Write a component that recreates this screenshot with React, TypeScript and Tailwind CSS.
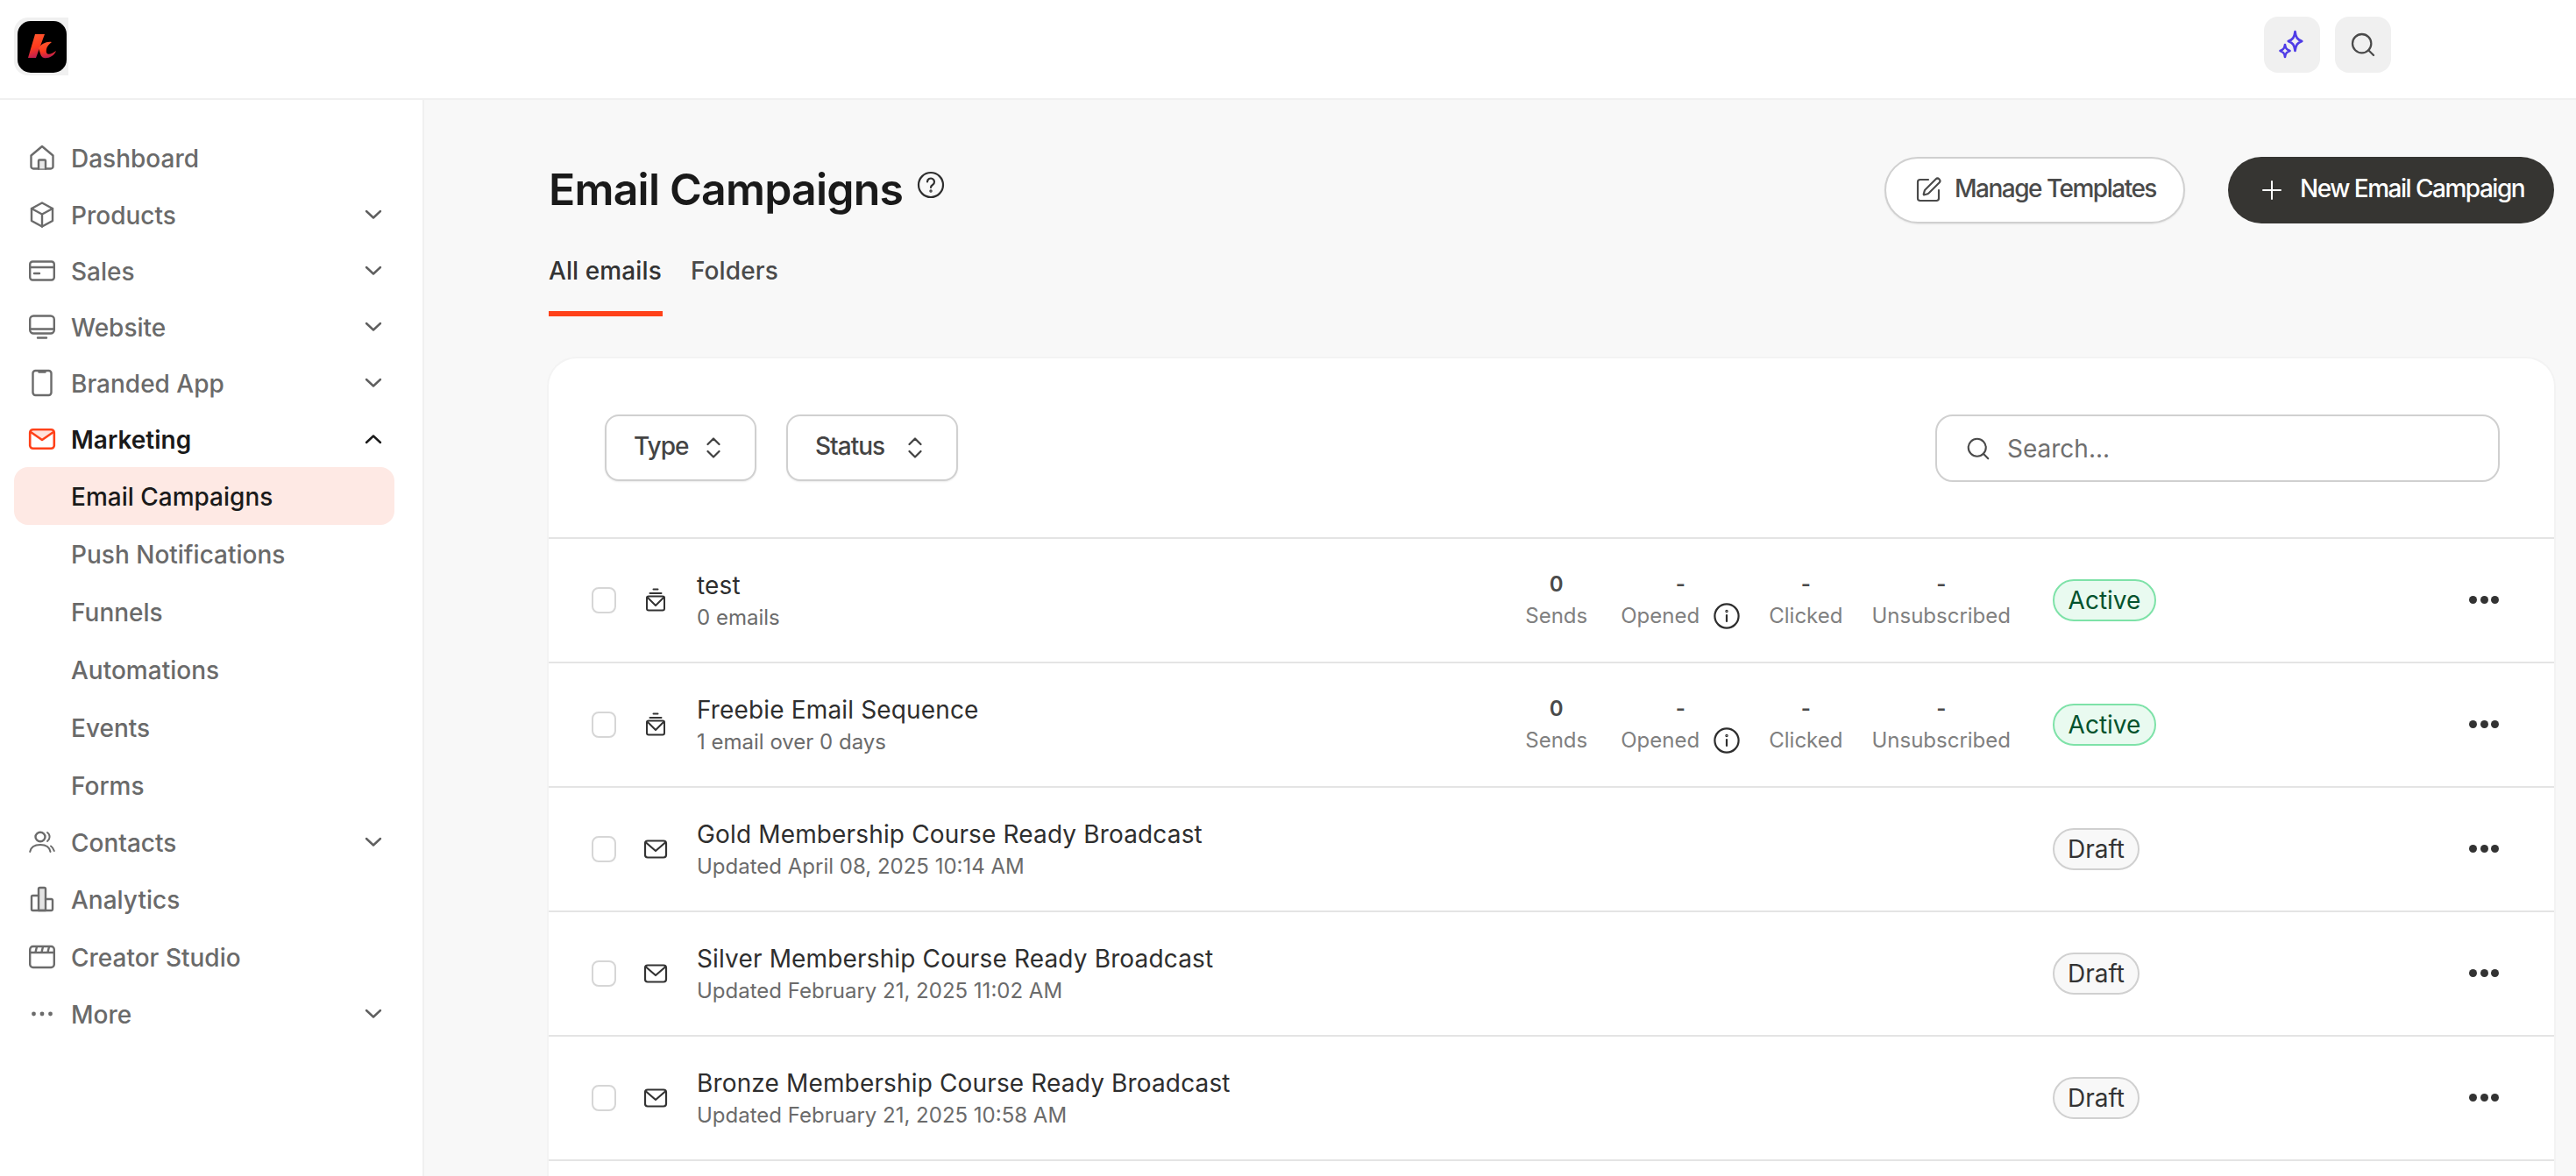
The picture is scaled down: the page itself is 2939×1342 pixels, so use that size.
import { Fragment } from "react";
import { Search, SquarePen } from "lucide-react";

const G = "#6b6b6b";

function Ic({ children }: { children: React.ReactNode }) {
  return (
    <svg width="32" height="32" viewBox="0 0 32 32" fill="none" stroke={G} strokeWidth="2.4" strokeLinecap="round" strokeLinejoin="round">
      {children}
    </svg>
  );
}

const icons: Record<string, React.ReactNode> = {
  home: (
    <Ic>
      <path d="M3.5 13.5 16 3l12.5 10.5V26a2.5 2.5 0 0 1-2.5 2.5H6A2.5 2.5 0 0 1 3.5 26Z" />
      <path d="M12 28.5V19.5a1 1 0 0 1 1-1h6a1 1 0 0 1 1 1v9" fill="#e8e8e8" />
    </Ic>
  ),
  box: (
    <Ic>
      <path d="M16 2.5 28 9v14l-12 6.5L4 23V9Z" />
      <path d="M4 9l12 6.5L28 9M16 15.5V29.5" />
    </Ic>
  ),
  card: (
    <Ic>
      <rect x="2.2" y="5.5" width="27.6" height="21" rx="3" />
      <path d="M2.2 12h27.6M7 19h6" />
    </Ic>
  ),
  monitor: (
    <Ic>
      <rect x="2.2" y="3.5" width="27.6" height="20" rx="4" />
      <path d="M2.2 18.5h27.6M11 28.5h10" />
    </Ic>
  ),
  tablet: (
    <Ic>
      <rect x="5.5" y="2" width="21" height="28" rx="3" />
      <path d="M12.5 3.5h7" />
    </Ic>
  ),
  mail: (
    <svg width="32" height="32" viewBox="0 0 32 32" fill="none" stroke="#ff4119" strokeWidth="2.6" strokeLinecap="round" strokeLinejoin="round">
      <path d="M3 7 16 17 29 7" fill="#ffe3dc" stroke="none" />
      <rect x="2.2" y="5.2" width="27.6" height="21.6" rx="3.5" />
      <path d="M3 8 16 17 29 8" />
    </svg>
  ),
  contacts: (
    <Ic>
      <ellipse cx="14" cy="10" rx="5.5" ry="5.2" />
      <path d="M2.2 27c1-5.5 6-8 11.8-8s10.5 2.5 11.5 8" strokeWidth="2" />
      <path d="M22 5c1.8 1.2 2.6 3 2.6 5s-.9 3.7-2.6 5M26 20.5c1.8 1.2 3 3 3.8 5.5" strokeWidth="2" />
    </Ic>
  ),
  chart: (
    <Ic>
      <path d="M12 29V4.5A1.5 1.5 0 0 1 13.5 3h5A1.5 1.5 0 0 1 20 4.5V29Z" fill="#e4e4e4" />
      <path d="M12 12H5.5A1.5 1.5 0 0 0 4 13.5V27.5A1.5 1.5 0 0 0 5.5 29H26.5A1.5 1.5 0 0 0 28 27.5V17.5A1.5 1.5 0 0 0 26.5 16H20" />
    </Ic>
  ),
  clapper: (
    <Ic>
      <rect x="2.2" y="4" width="27.6" height="24" rx="3.5" />
      <path d="M2.2 11h27.6M10 4.5l-1.5 6M17 4.5l-1.5 6M24 4.5l-1.5 6" />
    </Ic>
  ),
  dots: (
    <svg width="32" height="32" viewBox="0 0 32 32" fill={G}>
      <circle cx="6.5" cy="16" r="2.4" />
      <circle cx="16" cy="16" r="2.4" />
      <circle cx="25.5" cy="16" r="2.4" />
    </svg>
  ),
};

function Chevron({ up, dark }: { up?: boolean; dark?: boolean }) {
  return (
    <svg width="20" height="12" viewBox="0 0 20 12" fill="none" stroke={dark ? "#1a1a1a" : "#5f5f5f"} strokeWidth="2.4" strokeLinecap="round" strokeLinejoin="round">
      <path d={up ? "M2 10 10 2.5 18 10" : "M2 2 10 9.5 18 2"} />
    </svg>
  );
}

type Nav = { label: string; icon?: string; chev?: boolean; active?: boolean; sub?: boolean; current?: boolean };
const nav: Nav[] = [
  { label: "Dashboard", icon: "home" },
  { label: "Products", icon: "box", chev: true },
  { label: "Sales", icon: "card", chev: true },
  { label: "Website", icon: "monitor", chev: true },
  { label: "Branded App", icon: "tablet", chev: true },
  { label: "Marketing", icon: "mail", chev: true, active: true },
  { label: "Email Campaigns", sub: true, current: true },
  { label: "Push Notifications", sub: true },
  { label: "Funnels", sub: true },
  { label: "Automations", sub: true },
  { label: "Events", sub: true },
  { label: "Forms", sub: true },
  { label: "Contacts", icon: "contacts", chev: true },
  { label: "Analytics", icon: "chart" },
  { label: "Creator Studio", icon: "clapper" },
  { label: "More", icon: "dots", chev: true },
];

function Sidebar() {
  return (
    <aside className="w-[484px] shrink-0 border-r-2 border-[#f0f0f0] bg-white pt-[33px] pl-4 pr-[32px]">
      {nav.map((n) => (
        <div
          key={n.label}
          className={
            "flex items-center pl-[16px] pr-[14px] text-[28px] " +
            (n.current ? "rounded-[16px] bg-[#fee9e4] " : "") +
            (n.chev ? "h-[64px] " : "h-[66px] ") +
            (n.active ? "font-semibold text-[#1a1a1a]" : n.current ? "font-medium text-[#1a1a1a]" : "font-medium text-[#6a6a6a]")
          }
        >
          <span className="flex w-[49px] shrink-0 items-center">{n.icon ? icons[n.icon] : null}</span>
          <span className="flex-1 pt-[1px]">{n.label}</span>
          {n.chev ? <Chevron up={n.active} dark={n.active} /> : null}
        </div>
      ))}
    </aside>
  );
}

function Updown() {
  return (
    <svg width="18" height="26" viewBox="0 0 18 26" fill="none" stroke="#404040" strokeWidth="2.2" strokeLinecap="round" strokeLinejoin="round">
      <path d="M2.5 9 9 2.5 15.5 9M2.5 17 9 23.5 15.5 17" />
    </svg>
  );
}

function Header() {
  return (
    <header className="flex h-[114px] shrink-0 items-start border-b-2 border-[#f0f0f0] bg-white pl-4 pr-[211px]">
      <div className="mt-[20px] flex h-[66px] w-[62px] items-start rounded-l-[16px] bg-[#f0f0f0] pt-[4px] pl-[4px]">
        <svg width="56" height="59" viewBox="0 0 56 59" className="block">
          <defs>
            <linearGradient id="k" x1="0" y1="0" x2="0.2" y2="1">
              <stop offset="0" stopColor="#ff5a30" />
              <stop offset="0.6" stopColor="#ff3a1c" />
              <stop offset="1" stopColor="#c2204e" />
            </linearGradient>
          </defs>
          <rect width="56" height="59" rx="15" fill="#000" />
          <path d="M20 15H31L21 42H12Z" fill="url(#k)" />
          <path d="M24 31C27 26 33 23 39 24 35 27 32 31 33 36 34 39 39 38 44 34 42 40 35 43 30 42 26 41 26 36 24 31Z" fill="url(#k)" />
        </svg>
      </div>
      <div className="ml-auto mt-[19px] flex gap-[17px]">
        <div className="flex h-16 w-16 items-center justify-center rounded-2xl bg-[#f0f0f0]">
          <svg width="64" height="64" viewBox="0 0 64 64" fill="none" stroke="#4f3ce6" strokeWidth="2.6" strokeLinejoin="round">
            <path d="M35.5 17c.8 6.8 2.6 9.2 7.8 11-5.2 1.8-7 4.2-7.8 11-.8-6.8-2.6-9.2-7.8-11 5.2-1.8 7-4.2 7.8-11Z" />
            <path d="M24 32c.5 4.2 1.7 5.7 5.5 7-3.8 1.3-5 2.8-5.5 7-.5-4.2-1.7-5.7-5.5-7 3.8-1.3 5-2.8 5.5-7Z" />
          </svg>
        </div>
        <div className="flex h-16 w-16 items-center justify-center rounded-2xl bg-[#f0f0f0]">
          <Search size={32} strokeWidth={1.7} color="#4a4a4a" />
        </div>
      </div>
    </header>
  );
}

function StackMail() {
  return (
    <svg width="26" height="27" viewBox="0 0 26 27" fill="none" stroke="#333" strokeWidth="2" strokeLinecap="round" strokeLinejoin="round">
      <path d="M10.5 1.5h5M6.5 6h13" />
      <rect x="3" y="9.5" width="20" height="16" rx="2" />
      <path d="M3.5 10.5 13 20l9.5-9.5" />
    </svg>
  );
}

function PlainMail() {
  return (
    <svg width="28" height="24" viewBox="0 0 28 24" fill="none" stroke="#333" strokeWidth="2.2" strokeLinecap="round" strokeLinejoin="round">
      <rect x="2" y="2.5" width="24" height="19" rx="3" />
      <path d="M3 4.5 14 14l11-9.5" />
    </svg>
  );
}

function Info() {
  return (
    <svg width="30" height="30" viewBox="0 0 30 30" fill="none" stroke="#2e2e2e" strokeWidth="2.2" strokeLinecap="round">
      <circle cx="15" cy="15" r="13.6" />
      <path d="M15 14v7" />
      <circle cx="15" cy="9.5" r="0.6" />
    </svg>
  );
}

function Stat({ value, label, cls }: { value: string; label: string; cls?: string }) {
  return (
    <div className={"text-center " + (cls ?? "")}>
      <div className="text-[24px] leading-[36px] font-semibold text-[#4a4a4a]">{value}</div>
      <div className="text-[24px] leading-[36px] text-[#808080]">{label}</div>
    </div>
  );
}

type Row = { kind: "seq" | "mail"; title: string; sub: string; status: "Active" | "Draft" };
const rows: Row[] = [
  { kind: "seq", title: "test", sub: "0 emails", status: "Active" },
  { kind: "seq", title: "Freebie Email Sequence", sub: "1 email over 0 days", status: "Active" },
  { kind: "mail", title: "Gold Membership Course Ready Broadcast", sub: "Updated April 08, 2025 10:14 AM", status: "Draft" },
  { kind: "mail", title: "Silver Membership Course Ready Broadcast", sub: "Updated February 21, 2025 11:02 AM", status: "Draft" },
  { kind: "mail", title: "Bronze Membership Course Ready Broadcast", sub: "Updated February 21, 2025 10:58 AM", status: "Draft" },
];

function TableRow({ r }: { r: Row }) {
  return (
    <div className="flex h-[142px] items-center border-t-2 border-[#e4e4e4] pb-[1px] pl-[49px] pr-[63px]">
      <div className="h-[30px] w-[28px] shrink-0 rounded-[8px] border-2 border-[#d6d6d6]" />
      <div className="flex w-[92px] shrink-0 justify-center pr-[2px]">{r.kind === "seq" ? <StackMail /> : <PlainMail />}</div>
      <div className="min-w-0 flex-1">
        <div className="text-[28px] leading-[40px] font-normal tracking-[0.15px] text-[#2e2e2e]">{r.title}</div>
        <div className="text-[24px] leading-[34px] text-[#6b6b6b]">{r.sub}</div>
      </div>
      {r.status === "Active" ? (
        <div className="flex items-center gap-[33px]">
          <Stat value="0" label="Sends" cls="mr-[5px]" />
          <div className="w-[136px]">
            <div className="text-center text-[24px] leading-[36px] font-semibold text-[#4a4a4a]">-</div>
            <div className="flex items-center justify-between text-[24px] leading-[36px] text-[#808080]">
              <span>Opened</span>
              <Info />
            </div>
          </div>
          <Stat value="-" label="Clicked" />
          <Stat value="-" label="Unsubscribed" />
        </div>
      ) : null}
      <div className="ml-[48px] w-[475px] shrink-0">
        {r.status === "Active" ? (
          <span className="inline-flex h-[48px] w-[118px] items-center justify-center rounded-full border-2 border-[#7ee2a8] bg-[#e9faf0] text-[28px] font-normal text-[#03522d]">
            Active
          </span>
        ) : (
          <span className="inline-flex h-[48px] w-[99px] items-center justify-center rounded-full border-2 border-[#d0d0d0] bg-[#f8f8f8] text-[28px] text-[#333]">
            Draft
          </span>
        )}
      </div>
      <div className="flex w-[34px] shrink-0 justify-between">
        <span className="h-[9px] w-[9px] rounded-full bg-[#333]" />
        <span className="h-[9px] w-[9px] rounded-full bg-[#333]" />
        <span className="h-[9px] w-[9px] rounded-full bg-[#333]" />
      </div>
    </div>
  );
}

function FilterButton({ label, width }: { label: string; width: string }) {
  return (
    <button className={"flex h-[76px] items-center justify-between rounded-[16px] border-2 border-[#d0d0d0] bg-white pr-[38px] pl-[31px] text-[28px] font-medium tracking-[-1px] text-[#444] shadow-[0_1px_2px_rgba(0,0,0,0.08)] " + width}>
      <span className="-mt-[4px]">{label}</span>
      <Updown />
    </button>
  );
}

export default function App() {
  return (
    <div className="flex h-screen flex-col overflow-hidden bg-[#f8f8f8] font-[family-name:Inter,sans-serif]">
      <Header />
      <div className="flex min-h-0 flex-1">
        <Sidebar />
        <main className="flex min-w-0 flex-1 flex-col pt-[65px] pr-[25px] pl-[142px]">
          <div className="flex h-[76px] shrink-0 items-start justify-between">
            <div className="flex items-start">
              <h1 className="text-[50px] leading-[74px] font-semibold tracking-[-0.8px] text-[#1a1a1a]">Email Campaigns</h1>
              <svg width="32" height="32" viewBox="0 0 32 32" fill="none" stroke="#2e2e2e" strokeWidth="2.2" strokeLinecap="round" strokeLinejoin="round" className="mt-[16px] ml-[16px]">
                <circle cx="16" cy="16" r="14" />
                <path d="M12 12.5a4 4 0 1 1 6 3.5c-1.3.8-2 1.4-2 3" />
                <circle cx="16" cy="23" r="0.6" />
              </svg>
            </div>
            <div className="flex gap-[49px]">
              <button className="flex h-[76px] w-[343px] items-center gap-[14px] rounded-full border-2 border-[#d0d0d0] bg-white pl-[32px] text-[28px] font-medium tracking-[-1.5px] text-[#4a4a4a] shadow-[0_1px_2px_rgba(0,0,0,0.08)]">
                <SquarePen size={32} strokeWidth={1.6} color="#4a4a4a" />
                <span className="-mt-[4px]">Manage Templates</span>
              </button>
              <button className="flex h-[76px] w-[372px] items-center gap-[20px] rounded-full bg-[#363532] pl-[38px] text-[28px] font-medium tracking-[-1.5px] text-white">
                <svg width="24" height="24" viewBox="0 0 24 24" fill="none" stroke="#fff" strokeWidth="2" strokeLinecap="round">
                  <path d="M12 2v20M2 12h20" />
                </svg>
                <span className="-mt-[4px]">New Email Campaign</span>
              </button>
            </div>
          </div>

          <nav className="mt-[34px] flex shrink-0 gap-[32px] text-[28px] leading-[40px] font-medium tracking-[0.1px]">
            <div className="w-[130px] border-b-[6px] border-[#ff4119] pb-[26px] text-[#333]">All emails</div>
            <div className="text-[#4a4a4a]">Folders</div>
          </nav>

          <section className="mt-[48px] flex min-h-0 flex-1 flex-col overflow-hidden rounded-t-[32px] bg-white shadow-[0_0_0_2px_#f3f3f3]">
            <div className="flex h-[204px] shrink-0 items-start justify-between pt-[64px] pr-[62px] pl-[64px]">
              <div className="flex gap-[34px]">
                <FilterButton label="Type" width="w-[173px]" />
                <FilterButton label="Status" width="w-[196px]" />
              </div>
              <div className="flex h-[77px] w-[644px] items-center gap-[18px] rounded-[20px] border-2 border-[#d0d0d0] bg-white pl-[32px] text-[28px] text-[#6f6f6f]">
                <Search size={30} strokeWidth={1.7} color="#4a4a4a" />
                <span>Search...</span>
              </div>
            </div>
            {rows.map((r) => (
              <Fragment key={r.title}>
                <TableRow r={r} />
              </Fragment>
            ))}
            <div className="border-t-2 border-[#e4e4e4]" />
          </section>
        </main>
      </div>
    </div>
  );
}
